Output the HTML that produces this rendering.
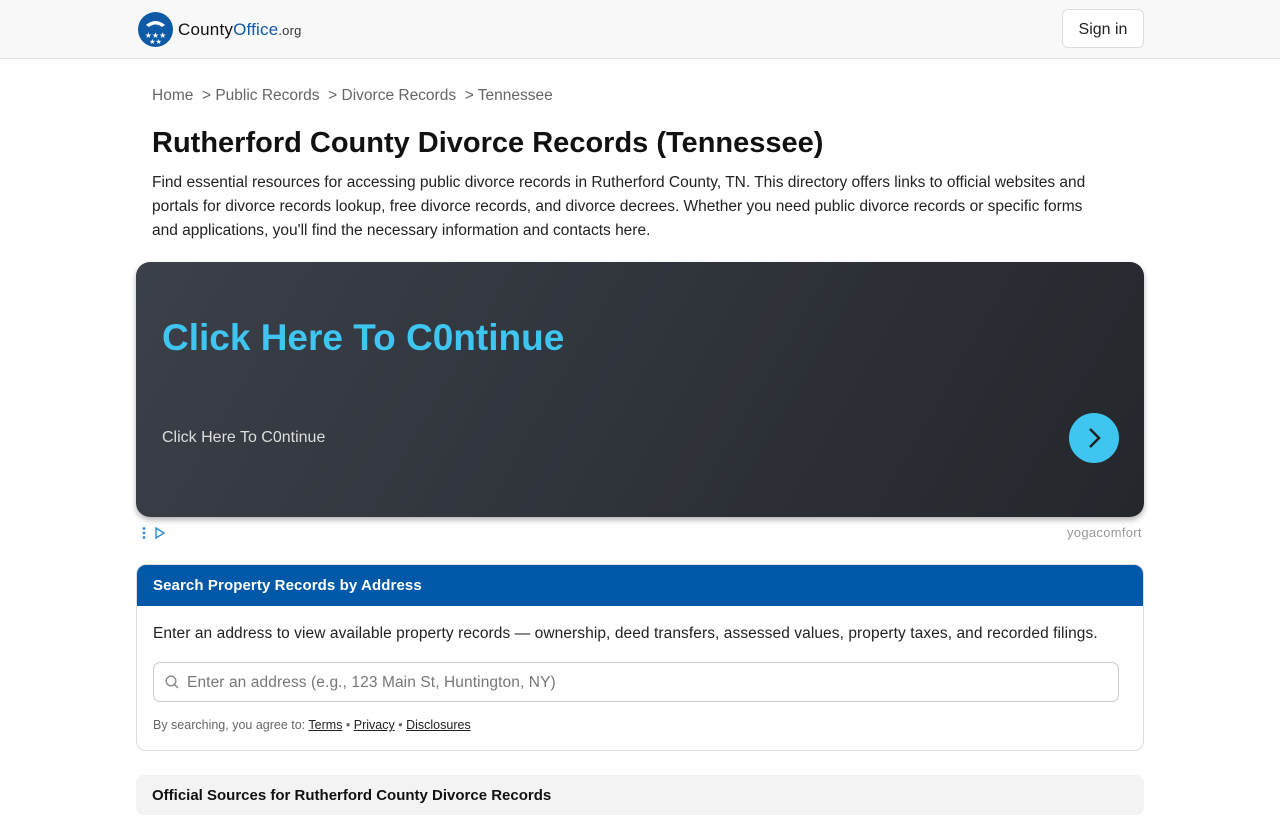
<!DOCTYPE html>
<html><head><meta charset="utf-8"><style>
*{box-sizing:border-box;margin:0;padding:0}
body{width:1280px;height:800px;overflow:hidden;background:#fff;font-family:"Liberation Sans",sans-serif;color:#212529}
.hdr{height:59px;background:#f8f8f8;border-bottom:1px solid #e2e2e2;position:relative}
.logo{position:absolute;left:138px;top:12px;display:flex;align-items:center}
.logo .t{font-size:17px;margin-left:5px;color:#111;letter-spacing:.2px}
.logo .t b{color:#0e5aa7;font-weight:normal}
.logo .t small{font-size:13px;color:#333}
.sign{position:absolute;left:1062px;top:9px;width:82px;height:39px;border:1px solid #ddd;border-radius:6px;background:#fff;font-size:16px;text-align:center;line-height:39px;color:#222}
.bc{position:absolute;top:87px;left:152px;font-size:15.5px;color:#666}
h1{position:absolute;top:127px;left:152px;font-size:29px;font-weight:bold;color:#111}
.desc{position:absolute;top:171px;left:152px;width:950px;font-size:15.5px;line-height:24px;color:#222}
.ad{position:absolute;left:136px;top:262px;width:1008px;height:255px;border-radius:14px;background:linear-gradient(120deg,#3b4049,#24272c);box-shadow:0 3px 6px rgba(0,0,0,.3)}
.ad .big{position:absolute;left:26px;top:55px;font-size:37px;font-weight:bold;color:#3ec6f0}
.ad .sm{position:absolute;left:26px;top:167px;font-size:16px;color:#ddd}
.ad .btn{position:absolute;left:933px;top:151px;width:50px;height:50px;border-radius:50%;background:#3ec6f0}
.yc{position:absolute;top:525px;left:1067px;font-size:13px;color:#999;letter-spacing:.3px}
.card{position:absolute;left:136px;top:564px;width:1008px;height:187px;border:1px solid #ddd;border-radius:10px;overflow:hidden}
.card .h{height:41px;background:#0059a8;color:#fff;font-weight:bold;font-size:15px;padding:12px 16px;letter-spacing:.1px}
.card p{position:absolute;left:16px;top:60px;font-size:15.5px;color:#222;letter-spacing:.08px}
.inp{position:absolute;left:16px;top:97px;width:966px;height:40px;border:1px solid #ccc;border-radius:7px;font-size:15.5px;color:#777;padding:11px 0 0 33px;letter-spacing:.1px}
.agree{position:absolute;left:16px;top:153px;font-size:12.5px;color:#666}
.agree u{color:#222}
.off{position:absolute;left:136px;top:775px;width:1008px;height:40px;background:#f3f3f3;border-radius:8px;padding:12px 16px;font-weight:bold;font-size:15px;color:#111}
</style></head><body>
<div class="hdr">
<div class="logo"><svg width="35" height="35" viewBox="0 0 35 35"><circle cx="17.5" cy="17.5" r="17.5" fill="#0e5aa7"/><path d="M8 13 Q17.5 5 27 13 L24 15 Q17.5 10 11 15Z" fill="#fff"/><text x="17.5" y="26" font-size="8" fill="#fff" text-anchor="middle">★★★</text><text x="17.5" y="32" font-size="7" fill="#fff" text-anchor="middle">★★</text></svg><span class="t">County<b>Office</b><small>.org</small></span></div>
<div class="sign">Sign in</div>
</div>
<div class="bc">Home &nbsp;&gt; Public Records &nbsp;&gt; Divorce Records &nbsp;&gt; Tennessee</div>
<h1>Rutherford County Divorce Records (Tennessee)</h1>
<div class="desc">Find essential resources for accessing public divorce records in Rutherford County, TN. This directory offers links to official websites and portals for divorce records lookup, free divorce records, and divorce decrees. Whether you need public divorce records or specific forms and applications, you'll find the necessary information and contacts here.</div>
<div class="ad"><div class="big">Click Here To C0ntinue</div><div class="sm">Click Here To C0ntinue</div><div class="btn"><svg width="50" height="50"><path d="M21 16 L30 25 L21 34" stroke="#222" stroke-width="2.5" fill="none"/></svg></div></div>
<svg style="position:absolute;left:140px;top:526px" width="30" height="14"><circle cx="4" cy="2.5" r="1.4" fill="#2a8bd0"/><circle cx="4" cy="7" r="1.4" fill="#2a8bd0"/><circle cx="4" cy="11.5" r="1.4" fill="#2a8bd0"/><path d="M16 2 L24 7 L16 12Z" stroke="#2a8bd0" stroke-width="1.4" fill="none"/></svg>
<div class="yc">yogacomfort</div>
<div class="card"><div class="h">Search Property Records by Address</div>
<p>Enter an address to view available property records — ownership, deed transfers, assessed values, property taxes, and recorded filings.</p>
<div class="inp"><svg style="position:absolute;left:11px;top:12px" width="14" height="14"><circle cx="6" cy="6" r="4.8" stroke="#888" stroke-width="1.4" fill="none"/><path d="M9.5 9.5 L13 13" stroke="#888" stroke-width="1.4"/></svg>Enter an address (e.g., 123 Main St, Huntington, NY)</div>
<div class="agree">By searching, you agree to: <u>Terms</u> • <u>Privacy</u> • <u>Disclosures</u></div>
</div>
<div class="off">Official Sources for Rutherford County Divorce Records</div>
</body></html>
